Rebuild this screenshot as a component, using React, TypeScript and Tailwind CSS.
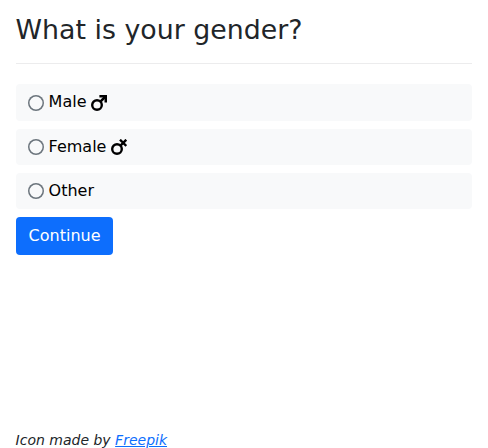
import type { ReactNode } from "react";

function MaleIcon() {
  return (
    <svg width="16" height="16" viewBox="0 0 16 16" fill="none" stroke="black" className="shrink-0">
      <circle cx="6" cy="10" r="4.8" strokeWidth="2.4" />
      <path d="M9.2 6.8 14.3 1.7" strokeWidth="2.6" />
      <path d="M8.4 1.25H14.75V7.6" strokeWidth="2.5" />
    </svg>
  );
}

function FemaleIcon() {
  return (
    <svg width="16" height="16" viewBox="0 0 16 16" fill="none" stroke="black" className="shrink-0">
      <circle cx="6" cy="10" r="4.8" strokeWidth="2.4" />
      <path d="M9.2 6.8 15.3 0.7M9 0.7 15.3 7" strokeWidth="2.4" />
    </svg>
  );
}

function Option({
  label,
  height,
  radioOffset,
  iconOffset = "",
  children,
}: {
  label: string;
  height: string;
  radioOffset: string;
  iconOffset?: string;
  children?: ReactNode;
}) {
  return (
    <label className={`flex items-start rounded bg-[#f8f9fa] pl-3 text-[16px] leading-6 text-black ${height}`}>
      <input
        type="radio"
        name="gender"
        className={`size-4 shrink-0 appearance-none rounded-full shadow-[inset_0_0_0_1.5px_#6c757d] checked:shadow-[inset_0_0_0_5px_#0d6efd] ${radioOffset}`}
      />
      <span className="ml-[5px] mt-[6px]">{label}</span>
      {children && <span className={`ml-[4.5px] ${iconOffset}`}>{children}</span>}
    </label>
  );
}

export default function App() {
  return (
    <div className="flex h-[448px] flex-col overflow-hidden bg-white pr-4 pl-[15.6px] font-['DejaVu_Sans',sans-serif] text-[#212529]">
      <h2 className="mt-[14px] text-[26.8px] leading-[31px]">What is your gender?</h2>
      <hr className="mt-[18px] border-0 border-t border-[#ececed]" />
      <form className="mt-5 flex flex-col items-stretch gap-2" onSubmit={(e) => e.preventDefault()}>
        <Option label="Male" height="h-[37px]" radioOffset="mt-[11px]" iconOffset="mt-[11px]">
          <MaleIcon />
        </Option>
        <Option label="Female" height="h-9" radioOffset="mt-[10px]" iconOffset="mt-[10px]">
          <FemaleIcon />
        </Option>
        <Option label="Other" height="h-9" radioOffset="mt-[10px]" />
        <button className="h-[38px] w-[97.4px] self-start rounded bg-[#0d6efd] pl-[0.6px] text-[16px] leading-6 text-white">
          Continue
        </button>
      </form>
      <footer className="mt-auto text-[14px] leading-4 italic">
        Icon made by{" "}
        <a href="#" className="text-[#0d6efd] underline">
          Freepik
        </a>
      </footer>
    </div>
  );
}
